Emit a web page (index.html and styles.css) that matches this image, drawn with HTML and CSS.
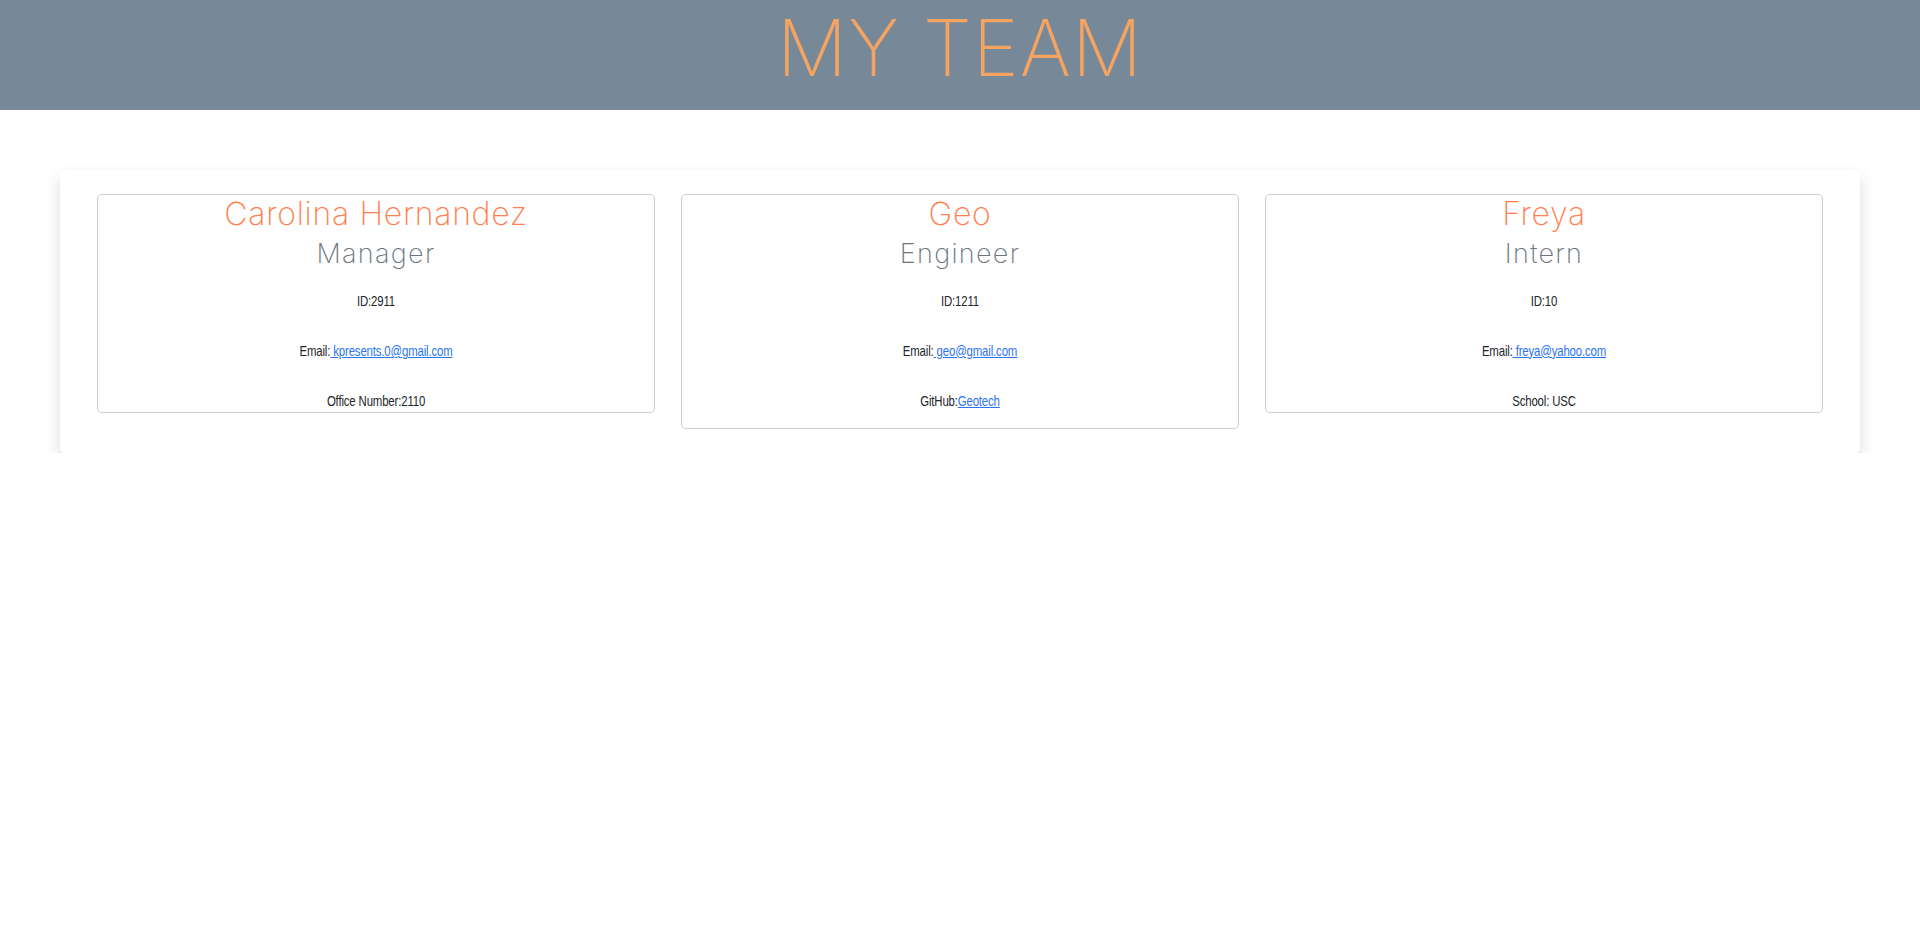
FILE: index.html
```html
<!DOCTYPE html>
<html lang="en">
<head>
<meta charset="utf-8">
<title>My Team</title>
<link rel="stylesheet" href="styles.css">
</head>
<body>
<header class="banner">
  <h1 class="banner-title">MY TEAM</h1>
</header>
<main class="team">
  <section class="card">
    <h2 class="card-name">Carolina Hernandez</h2>
    <h3 class="card-role">Manager</h3>
    <p class="card-line card-line--first">ID:2911</p>
    <p class="card-line">Email:<a href="#"> kpresents.0@gmail.com</a></p>
    <p class="card-line">Office Number:2110</p>
  </section>
  <section class="card card--tall">
    <h2 class="card-name">Geo</h2>
    <h3 class="card-role">Engineer</h3>
    <p class="card-line card-line--first">ID:1211</p>
    <p class="card-line">Email:<a href="#"> geo@gmail.com</a></p>
    <p class="card-line">GitHub:<a href="#">Geotech</a></p>
  </section>
  <section class="card">
    <h2 class="card-name">Freya</h2>
    <h3 class="card-role">Intern</h3>
    <p class="card-line card-line--first">ID:10</p>
    <p class="card-line">Email:<a href="#"> freya@yahoo.com</a></p>
    <p class="card-line">School: USC</p>
  </section>
</main>
</body>
</html>
```
FILE: styles.css
```css
* { box-sizing: border-box; }

body {
  margin: 0;
  background: #ffffff;
  font-family: "Liberation Sans", Arial, sans-serif;
  color: #212529;
}

.banner {
  height: 110px;
  background: #778899;
  text-align: center;
}

.banner-title {
  margin: 0;
  padding-bottom: 14px;
  font-family: Inter, "Noto Sans", sans-serif;
  font-weight: 200;
  font-size: 78px;
  line-height: 96px;
  color: #f4a460;
  letter-spacing: 1px;
}

.team {
  margin: 60px 60px 0;
  padding: 24px 37px;
  background: #fff;
  border-radius: 5px;
  box-shadow: 0 8px 16px rgba(0, 0, 0, 0.15);
  display: grid;
  grid-template-columns: repeat(3, 1fr);
  gap: 26px;
  align-items: start;
}

.card {
  border: 1px solid #cfcfcf;
  border-radius: 5px;
  text-align: center;
}

.card--tall {
  padding-bottom: 16px;
}

.card-name {
  margin: 0;
  font-family: Inter, "Noto Sans", sans-serif;
  font-weight: 200;
  font-size: 32px;
  line-height: 38px;
  letter-spacing: 0.7px;
  color: #ff7f50;
}

.card-role {
  margin: 0;
  font-family: Inter, "Noto Sans", sans-serif;
  font-weight: 200;
  font-size: 27px;
  line-height: 41px;
  letter-spacing: 1.3px;
  color: #6c757d;
}

.card-line {
  margin: 28px 0 0;
  font-size: 15px;
  line-height: 22px;
  letter-spacing: -0.2px;
  transform: scaleX(0.76);
}

.card-line--first {
  margin-top: 16px;
}

.card-line a {
  color: #2a75f0;
  text-decoration: underline;
}
```
